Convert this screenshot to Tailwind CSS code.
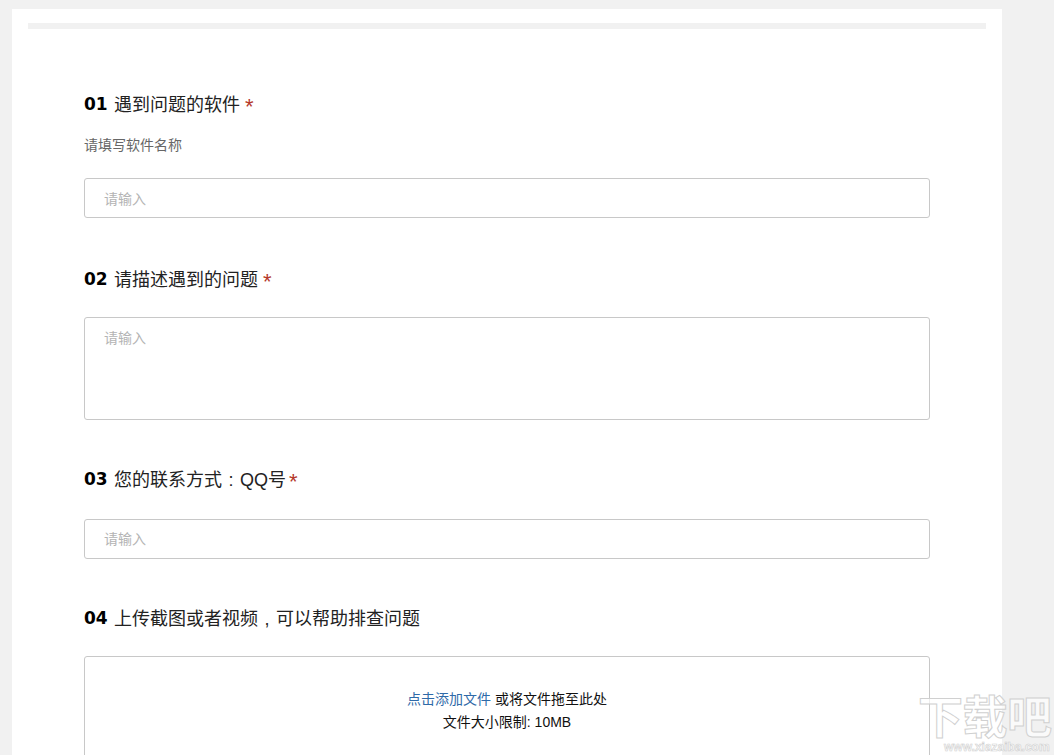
<!DOCTYPE html>
<html lang="zh-CN">
  <head>
    <meta charset="UTF-8" />
    <title>问题反馈</title>
    <script src="https://cdn.jsdelivr.net/npm/@tailwindcss/browser@4"></script>
  </head>
  <body class="bg-[#f1f1f1] h-[755px] overflow-hidden font-['Liberation_Sans','Noto_Sans_CJK_SC',sans-serif]">
    <div class="relative w-[1054px] h-[755px] overflow-hidden pt-[9px] pl-[12px]">
      <div class="w-[990px] h-[746px] bg-white pt-[14px] px-[16px]">
        <div class="h-[6px] w-[958px] bg-[#f1f1f1]"></div>

        <div class="pl-[56px] w-[902px]">
          <!-- 01 -->
          <div class="flex items-center h-[24px] mt-[64px] text-[18px] text-[#222]">
            <span class="font-['DejaVu_Sans'] font-bold text-[17px] text-black w-[30px]">01</span>
            <span>遇到问题的软件</span>
            <span class="ml-[5px] text-[22px] leading-[24px] pt-[3px] text-[#b5382b]">*</span>
          </div>
          <p class="mt-[18px] h-[20px] leading-[20px] text-[14px] text-[#666]">请填写软件名称</p>
          <div class="mt-[23px] h-[40px] border border-[#c8c8c8] rounded-[3px] pl-[19px] leading-[40px] text-[14px] text-[#b4b4b4]">请输入</div>

          <!-- 02 -->
          <div class="flex items-center h-[24px] mt-[50px] text-[18px] text-[#222]">
            <span class="font-['DejaVu_Sans'] font-bold text-[17px] text-black w-[30px]">02</span>
            <span>请描述遇到的问题</span>
            <span class="ml-[5px] text-[22px] leading-[24px] pt-[3px] text-[#b5382b]">*</span>
          </div>
          <div class="mt-[25px] h-[103px] border border-[#c8c8c8] rounded-[3px] pl-[19px] pt-[10px] leading-[20px] text-[14px] text-[#b4b4b4]">请输入</div>

          <!-- 03 -->
          <div class="flex items-center h-[24px] mt-[48px] text-[18px] text-[#222]">
            <span class="font-['DejaVu_Sans'] font-bold text-[17px] text-black w-[30px]">03</span>
            <span>您的联系方式<span class="inline-block w-[18px] text-center">:</span>QQ号</span>
            <span class="ml-[3px] text-[22px] leading-[24px] pt-[3px] text-[#b5382b]">*</span>
          </div>
          <div class="mt-[27px] h-[40px] border border-[#c8c8c8] rounded-[3px] pl-[19px] leading-[38px] text-[14px] text-[#b4b4b4]">请输入</div>

          <!-- 04 -->
          <div class="flex items-center h-[24px] mt-[48px] text-[18px] text-[#222]">
            <span class="font-['DejaVu_Sans'] font-bold text-[17px] text-black w-[30px]">04</span>
            <span>上传截图或者视频<span class="inline-block w-[18px] text-center">,</span>可以帮助排查问题</span>
          </div>
          <div class="mt-[25px] h-[140px] border border-[#c8c8c8] rounded-[3px] pt-[31px] text-center text-[14px] leading-[23px] text-[#111]">
            <p><span class="text-[#2f6aa8]">点击添加文件</span> 或将文件拖至此处</p>
            <p>文件大小限制: 10MB</p>
          </div>
        </div>
      </div>

      <!-- watermark -->
      <div class="absolute left-[918px] top-[696px] w-[136px]">
        <div class="h-[45px] text-[45px] leading-[45px] font-bold tracking-[-0.5px] whitespace-nowrap text-white/70 [-webkit-text-stroke:1px_#d0d0d0]">下载吧</div>
        <div class="pl-[26px] h-[12px] text-[12px] leading-[12px] font-bold whitespace-nowrap text-white/70 [-webkit-text-stroke:0.6px_#d0d0d0]">www.xiazaiba.com</div>
      </div>
    </div>
  </body>
</html>
